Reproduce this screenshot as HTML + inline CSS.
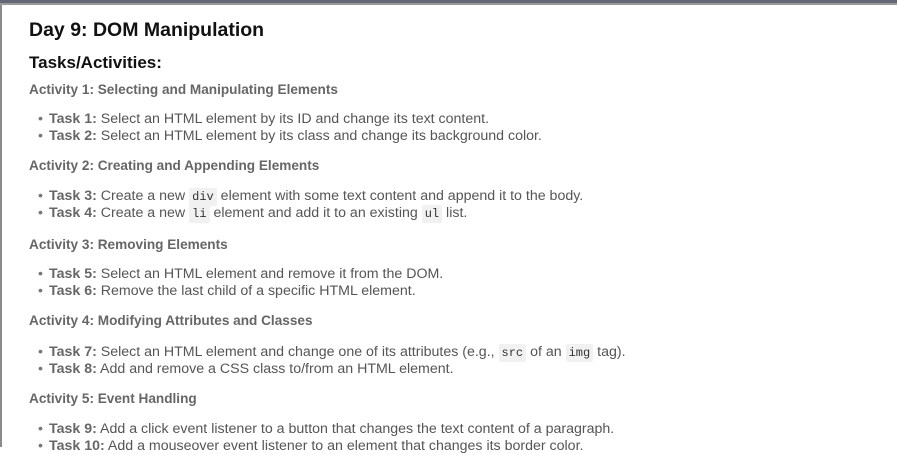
<!DOCTYPE html>
<html><head><style>
body{margin:0;width:897px;height:447px;overflow:hidden;background:#fff;font-family:"Liberation Sans",sans-serif;position:relative}
.top{position:absolute;left:0;top:0;width:897px;height:3px;background:#636776}
.top2{position:absolute;left:0;top:3px;width:897px;height:2px;background:#9a9a9a}
.left{position:absolute;left:0;top:5px;width:2px;height:442px;background:#8a8a8a}
.l{position:absolute;white-space:nowrap;line-height:17px}
h1,h2,h4{margin:0;position:absolute;white-space:nowrap;left:29px}
h1{font-size:19.5px;color:#111;top:19px;font-weight:bold}
h2{font-size:17px;color:#111;top:53px;font-weight:bold}
h4{font-size:13.6px;color:#666;font-weight:bold}
.t{left:38px;font-size:14.2px;color:#555}
.t b{color:#666}
.t:before{content:"•";display:inline-block;width:11px;color:#777}
code{font-family:"Liberation Mono",monospace;font-size:12px;background:#f1f1f1;padding:2px 3px;border-radius:2px;color:#333}
</style></head><body>
<div class="top"></div><div class="top2"></div><div class="left"></div>
<h1>Day 9: DOM Manipulation</h1>
<h2>Tasks/Activities:</h2>
<h4 style="top:82px">Activity 1: Selecting and Manipulating Elements</h4>
<div class="l t" style="top:111px"><b>Task 1:</b> Select an HTML element by its ID and change its text content.</div>
<div class="l t" style="top:128px"><b>Task 2:</b> Select an HTML element by its class and change its background color.</div>
<h4 style="top:158px">Activity 2: Creating and Appending Elements</h4>
<div class="l t" style="top:188px"><b>Task 3:</b> Create a new <code>div</code> element with some text content and append it to the body.</div>
<div class="l t" style="top:205px"><b>Task 4:</b> Create a new <code>li</code> element and add it to an existing <code>ul</code> list.</div>
<h4 style="top:237px">Activity 3: Removing Elements</h4>
<div class="l t" style="top:266px"><b>Task 5:</b> Select an HTML element and remove it from the DOM.</div>
<div class="l t" style="top:283px"><b>Task 6:</b> Remove the last child of a specific HTML element.</div>
<h4 style="top:313px">Activity 4: Modifying Attributes and Classes</h4>
<div class="l t" style="top:344px"><b>Task 7:</b> Select an HTML element and change one of its attributes (e.g., <code>src</code> of an <code>img</code> tag).</div>
<div class="l t" style="top:361px"><b>Task 8:</b> Add and remove a CSS class to/from an HTML element.</div>
<h4 style="top:391px">Activity 5: Event Handling</h4>
<div class="l t" style="top:421px"><b>Task 9:</b> Add a click event listener to a button that changes the text content of a paragraph.</div>
<div class="l t" style="top:438px"><b>Task 10:</b> Add a mouseover event listener to an element that changes its border color.</div>
</body></html>
